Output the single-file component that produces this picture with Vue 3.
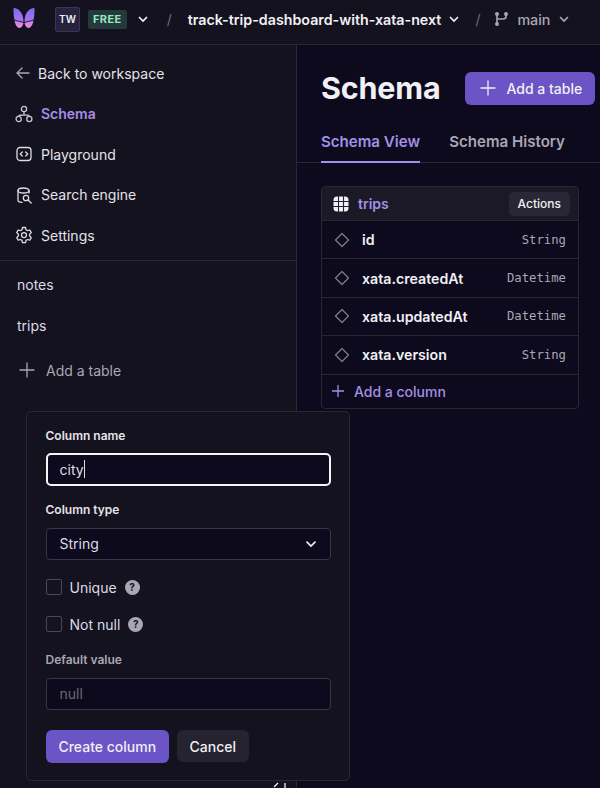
<script setup>
const nav = [
  { label: 'Schema', key: 'schema', active: true },
  { label: 'Playground', key: 'play' },
  { label: 'Search engine', key: 'search' },
  { label: 'Settings', key: 'settings' },
]
const columns = [
  { name: 'id', type: 'String' },
  { name: 'xata.createdAt', type: 'Datetime' },
  { name: 'xata.updatedAt', type: 'Datetime' },
  { name: 'xata.version', type: 'String' },
]
</script>

<template>
  <div class="page">
    <header class="topbar">
      <svg class="logo" width="24" height="24" viewBox="0 0 24 24">
        <defs>
          <linearGradient id="wing" x1="0" y1="0" x2="0" y2="1">
            <stop offset="0" stop-color="#8468f2" />
            <stop offset="1" stop-color="#a874f0" />
          </linearGradient>
          <linearGradient id="low" x1="0" y1="0" x2="0" y2="1">
            <stop offset="0" stop-color="#c77cec" />
            <stop offset="1" stop-color="#ea8fe6" />
          </linearGradient>
        </defs>
        <path d="M1.500 1C7 1 11.500 6 11.500 15C8 14 4 13.500 2.500 12.500C1.500 10 1.500 5 1.500 1Z" fill="url(#wing)" />
        <path d="M22.500 1C17 1 12.500 6 12.500 15C16 14 20 13.500 21.500 12.500C22.500 10 22.500 5 22.500 1Z" fill="url(#wing)" />
        <path d="M2.500 13.500C5 14.500 9 15 11.500 16C11 18 9.500 21 7.500 21C5 21 3 17 2.500 13.500Z" fill="url(#low)" />
        <path d="M21.500 13.500C19 14.500 15 15 12.500 16C13 18 14.500 21 16.500 21C19 21 21 17 21.500 13.500Z" fill="url(#low)" />
      </svg>
      <span class="avatar">TW</span>
      <span class="plan">FREE</span>
      <svg class="chev white first" width="12" height="12" viewBox="0 0 12 12"><path d="M2.500 4.500 6 8l3.500-3.500" /></svg>
      <span class="slash s1">/</span>
      <span class="repo">track-trip-dashboard-with-xata-next</span>
      <svg class="chev white repochev" width="12" height="12" viewBox="0 0 12 12"><path d="M2.500 4.500 6 8l3.500-3.500" /></svg>
      <span class="slash s2">/</span>
      <svg class="branch" width="14" height="16" viewBox="0 0 14 16">
        <circle cx="3" cy="3" r="2" /><circle cx="3" cy="13" r="2" /><circle cx="12" cy="3" r="2" />
        <path d="M3 4v8M12 4v1.500C12 7.500 11 8 9 8H3" />
      </svg>
      <span class="branchname">main</span>
      <svg class="chev grey" width="12" height="12" viewBox="0 0 12 12"><path d="M2.500 4.500 6 8l3.500-3.500" /></svg>
    </header>

    <div class="body">
      <aside class="sidebar">
        <nav class="nav">
          <a class="navitem back">
            <svg width="16" height="16" viewBox="0 0 16 16" class="ico grey"><path d="M14 8H2.500M7 3 2 8l5 5" /></svg>
            <span>Back to workspace</span>
          </a>
          <a v-for="item in nav" :key="item.key" class="navitem" :class="{ active: item.active }">
            <svg v-if="item.key === 'schema'" width="18" height="18" viewBox="0 0 18 18" class="ico">
              <circle cx="9" cy="4" r="2.600" /><circle cx="3.700" cy="14" r="2.600" /><circle cx="14.300" cy="14" r="2.600" />
              <path d="M9 6.600V10M3.700 11.400C3.700 10 5 10 9 10s5.300 0 5.300 1.400" />
            </svg>
            <svg v-else-if="item.key === 'play'" width="18" height="18" viewBox="0 0 18 18" class="ico">
              <rect x="2" y="2.500" width="14" height="13" rx="3" />
              <path d="M7.300 7 5.300 9l2 2M10.700 7l2 2-2 2" />
            </svg>
            <svg v-else-if="item.key === 'search'" width="18" height="18" viewBox="0 0 18 18" class="ico">
              <path d="M14 7V4.500C14 3 11.500 2 8.500 2S3 3 3 4.500v10C3 15.500 5 16.300 7 16.400" />
              <path d="M3 4.500C3 6 5.500 7 8.500 7S14 6 14 4.500" />
              <circle cx="11" cy="12" r="2.700" /><path d="m13 14 3.200 3" />
            </svg>
            <svg v-else width="18" height="18" viewBox="0 0 18 18" class="ico">
              <path d="M7.500 1.500h3l.5 2.300 1.600.9 2.200-.7 1.500 2.600-1.700 1.600v1.800l1.700 1.600-1.500 2.600-2.200-.7-1.600.9-.5 2.300h-3L7 14.400l-1.600-.9-2.200.7-1.500-2.600 1.700-1.600V8.200L1.700 6.600l1.500-2.600 2.200.7L7 3.800Z" stroke-linejoin="round" />
              <circle cx="9" cy="9.100" r="2.500" />
            </svg>
            <span>{{ item.label }}</span>
          </a>
        </nav>
        <div class="tables">
          <div class="tableitem">notes</div>
          <div class="tableitem">trips</div>
          <div class="addtable">
            <svg width="16" height="16" viewBox="0 0 16 16" class="ico grey"><path d="M8 1v14M1 8h14" /></svg>
            <span>Add a table</span>
          </div>
        </div>
      </aside>

      <main class="main">
        <div class="titlerow">
          <h1>Schema</h1>
          <button class="btn primary big">
            <svg width="16" height="16" viewBox="0 0 16 16" class="ico white"><path d="M8 1v14M1 8h14" /></svg>
            Add a table
          </button>
        </div>
        <div class="tabs">
          <span class="tab on">Schema View</span>
          <span class="tab">Schema History</span>
        </div>
        <section class="card">
          <div class="cardhead">
            <svg width="16" height="16" viewBox="0 0 16 16" class="grid">
              <rect x="0.500" y="0.500" width="15" height="15" rx="3.500" fill="#f1f0f4" />
              <path d="M5.500 0v16M10.500 0v16M0 5.500h16M0 10.500h16" stroke="#23212e" stroke-width="1.100" />
            </svg>
            <span class="cardname">trips</span>
            <span class="actions">Actions</span>
          </div>
          <div v-for="c in columns" :key="c.name" class="row">
            <svg width="16" height="16" viewBox="0 0 16 16" class="ico diamond"><path d="M8 1.500 14.500 8 8 14.500 1.500 8Z" stroke-linejoin="round" /></svg>
            <span class="colname">{{ c.name }}</span>
            <span class="coltype">{{ c.type }}</span>
          </div>
          <div class="addcol">
            <svg width="12" height="12" viewBox="0 0 12 12" class="ico violet"><path d="M6 0v12M0 6h12" /></svg>
            <span>Add a column</span>
          </div>
        </section>
      </main>
    </div>

    <form class="popover" @submit.prevent>
      <label class="lbl">Column name</label>
      <div class="field focus"><span class="val">city</span><i class="caret"></i></div>
      <label class="lbl second">Column type</label>
      <div class="field select">
        <span class="val">String</span>
        <svg class="chev white" width="12" height="12" viewBox="0 0 12 12"><path d="M2 4.200 6 8l4-3.800" /></svg>
      </div>
      <div class="check c1"><i class="box"></i><span>Unique</span><b class="help">?</b></div>
      <div class="check c2"><i class="box"></i><span>Not null</span><b class="help">?</b></div>
      <label class="lbl muted">Default value</label>
      <div class="field plain"><span class="placeholder">null</span></div>
      <div class="buttons">
        <button class="btn primary create">Create column</button>
        <button class="btn ghost">Cancel</button>
      </div>
    </form>

    <svg class="collapse" width="20" height="8" viewBox="0 0 20 8"><path d="M6 1 2 5M13 1v7" /></svg>
  </div>
</template>

<style>
html, body { margin: 0; background: #0c0a1c; }
</style>

<style scoped>
* { box-sizing: border-box; }
.page {
  position: relative;
  width: 600px;
  height: 788px;
  overflow: hidden;
  background: #0c0a1c;
  color: #f1f0f4;
  font-family: Inter, "Liberation Sans", sans-serif;
  font-size: 14px;
}
.ico, .chev, .branch { fill: none; stroke: currentColor; stroke-linecap: round; stroke-width: 1.300; flex: none; }
.grey { color: #a9a7b3; }
.white { color: #f1f0f4; }
.violet { color: #a48fe6; }

.topbar {
  height: 45px;
  display: flex;
  align-items: center;
  padding: 0 0 6px 12px;
  background: #14121f;
  border-bottom: 1px solid #292735;
}
.logo { flex: none; }
.avatar {
  width: 25px;
  height: 25px;
  margin-left: 19px;
  display: flex;
  align-items: center;
  justify-content: center;
  background: #27233f;
  border: 1px solid #38345a;
  border-radius: 2px;
  font-size: 10px;
  font-weight: 600;
}
.plan {
  margin-left: 8px;
  height: 19px;
  padding: 0 5px;
  display: flex;
  align-items: center;
  background: #24393b;
  border-radius: 2px;
  color: #97e6bd;
  font-size: 11px;
  font-weight: 700;
  letter-spacing: .4px;
}
.chev { stroke-width: 1.700; }
.first { margin-left: 10px; }
.slash { color: #6f6d79; font-size: 14px; }
.s1 { margin-left: 18px; }
.repo { margin-left: 16px; font-size: 14.250px; font-weight: 600; white-space: nowrap; }
.repochev { margin-left: 7px; }
.s2 { margin-left: 15px; }
.branch { margin-left: 14px; color: #a9a7b3; stroke-width: 1.600; }
.branch circle { fill: currentColor; stroke: none; }
.branchname { margin-left: 9px; font-size: 14.300px; font-weight: 500; color: #a9a7b3; }
.chev.grey { margin-left: 8px; }

.body { display: flex; height: 743px; }
.sidebar {
  flex: none;
  width: 297px;
  background: #14121f;
  border-right: 1px solid #292735;
}
.nav {
  height: 216px;
  padding-top: 8px;
  border-bottom: 1px solid #292735;
}
.navitem {
  height: 40.500px;
  display: flex;
  align-items: center;
  gap: 8px;
  padding-left: 15px;
  color: #e4e3e9;
  font-size: 14px;
}
.navitem .ico { color: #dddce3; }
.navitem.back { gap: 7px; }
.navitem.back .ico { color: #a9a7b3; }
.navitem.active { color: #a48fe6; font-weight: 600; }
.navitem.active .ico { color: #c6c4cf; }
.tables { padding-top: 3px; }
.tableitem {
  height: 41px;
  display: flex;
  align-items: center;
  padding-left: 17px;
  color: #dddce3;
  font-size: 14px;
}
.addtable {
  display: flex;
  align-items: center;
  gap: 11px;
  padding: 4px 0 0 19px;
  height: 44px;
  color: #a9a7b3;
  font-size: 14px;
}

.main { flex: none; width: 303px; padding-left: 24px; overflow: hidden; }
.titlerow {
  height: 86px;
  width: 300px;
  display: flex;
  align-items: center;
  gap: 25px;
}
h1 { margin: 0 0 2px; font-size: 30.500px; font-weight: 700; letter-spacing: -.2px; color: #f1f0f4; }
.btn {
  border: 0;
  font-family: inherit;
  font-size: 14px;
  font-weight: 500;
  color: #f1f0f4;
  border-radius: 6px;
  cursor: pointer;
}
.primary { background: #6b54c6; }
.big {
  flex: none;
  width: 130px;
  height: 33px;
  display: flex;
  align-items: center;
  gap: 10px;
  padding: 0 0 0 15px;
  white-space: nowrap;
}
.tabs {
  height: 32px;
  display: flex;
  gap: 29px;
  border-bottom: 1px solid #292735;
  margin-left: -24px;
  padding-left: 24px;
  width: 303px;
}
.tab {
  height: 32px;
  padding: 1px 0 0;
  font-size: 15.100px;
  font-weight: 600;
  color: #a9a7b3;
  white-space: nowrap;
}
.tab.on { color: #a48fe6; border-bottom: 2px solid #a48fe6; }
.card {
  width: 258px;
  margin-top: 23px;
  border: 1px solid #292735;
  border-radius: 4px;
  overflow: hidden;
}
.cardhead {
  height: 34px;
  display: flex;
  align-items: center;
  padding: 0 8px 0 11px;
  background: #1b1926;
  border-bottom: 1px solid #292735;
}
.cardname { margin-left: 9px; color: #a48fe6; font-size: 14px; font-weight: 600; }
.actions {
  margin-left: auto;
  height: 24px;
  padding: 0 9px;
  display: flex;
  align-items: center;
  background: #292735;
  border-radius: 5px;
  font-size: 12px;
  font-weight: 500;
}
.row {
  height: 38.400px;
  display: flex;
  align-items: center;
  padding: 0 12px;
  border-bottom: 1px solid #292735;
}
.diamond { color: #7d7b87; margin-right: 12px; }
.colname { font-size: 14.200px; font-weight: 600; color: #f1f0f4; }
.coltype {
  margin-left: auto;
  font-family: "DejaVu Sans Mono", "Liberation Mono", monospace;
  font-size: 12.250px;
  color: #a9a7b3;
}
.addcol {
  height: 33px;
  display: flex;
  align-items: center;
  gap: 10px;
  padding: 0 0 0 10px;
  color: #a48fe6;
  font-size: 14px;
  font-weight: 500;
}

.popover {
  position: absolute;
  left: 26px;
  top: 411px;
  width: 324px;
  height: 370px;
  padding: 16px 18.500px 0;
  background: #14121f;
  border: 1px solid #292735;
  border-radius: 5px;
}
.lbl { display: block; height: 16px; font-size: 12px; font-weight: 600; color: #e4e3e9; line-height: 16px; }
.lbl.second { margin-top: 16.500px; }
.lbl.muted { margin-top: 20px; color: #a9a7b3; }
.field {
  height: 31.500px;
  margin-top: 10px;
  display: flex;
  align-items: center;
  padding: 0 13px;
  background: #0c0a1c;
  border: 1px solid #383644;
  border-radius: 4px;
  font-size: 14px;
}
.field.focus { height: 33px; border: 2px solid #f5f5f7; margin-top: 8.500px; padding-left: 12px; border-radius: 5px; }
.field.plain { height: 32px; margin-top: 9.500px; }
.val { color: #dddce3; }
.caret { width: 1px; height: 18px; background: #dddce3; }
.select { justify-content: space-between; }
.check {
  display: flex;
  align-items: center;
  font-size: 14px;
  color: #dddce3;
  height: 16px;
}
.c1 { margin-top: 19.500px; }
.c2 { margin-top: 21px; }
.box {
  width: 16px;
  height: 16px;
  border: 1.500px solid #4a4855;
  border-radius: 2px;
  margin-right: 8px;
}
.help {
  width: 15px;
  height: 15px;
  margin-left: 8px;
  display: flex;
  align-items: center;
  justify-content: center;
  border-radius: 50%;
  background: #a9a7b3;
  color: #14121f;
  font-size: 10px;
  font-weight: 700;
}
.placeholder { color: #6b6a72; }
.buttons { display: flex; gap: 8px; margin-top: 20px; align-items: center; }
.create { width: 123.500px; height: 33px; padding: 0; }
.ghost { width: 71.500px; height: 32px; padding: 0; background: #252330; }
.collapse {
  position: absolute;
  left: 272px;
  top: 782px;
  fill: none;
  stroke: #f1f0f4;
  stroke-width: 1.300;
}
</style>
